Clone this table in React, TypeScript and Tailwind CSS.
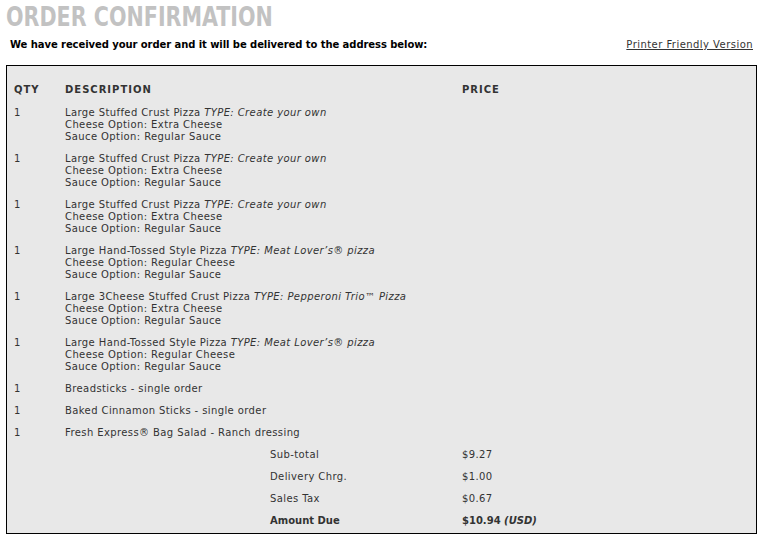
const items = [
  { qty: 1, name: 'Large Stuffed Crust Pizza', type: 'Create your own', cheese: 'Extra Cheese', sauce: 'Regular Sauce' },
  { qty: 1, name: 'Large Stuffed Crust Pizza', type: 'Create your own', cheese: 'Extra Cheese', sauce: 'Regular Sauce' },
  { qty: 1, name: 'Large Stuffed Crust Pizza', type: 'Create your own', cheese: 'Extra Cheese', sauce: 'Regular Sauce' },
  { qty: 1, name: 'Large Hand-Tossed Style Pizza', type: 'Meat Lover\u2019s\u00ae pizza', cheese: 'Regular Cheese', sauce: 'Regular Sauce' },
  { qty: 1, name: 'Large 3Cheese Stuffed Crust Pizza', type: 'Pepperoni Trio\u2122 Pizza', cheese: 'Extra Cheese', sauce: 'Regular Sauce' },
  { qty: 1, name: 'Large Hand-Tossed Style Pizza', type: 'Meat Lover\u2019s\u00ae pizza', cheese: 'Regular Cheese', sauce: 'Regular Sauce' },
];

const sides = [
  'Breadsticks - single order',
  'Baked Cinnamon Sticks - single order',
  'Fresh Express\u00ae Bag Salad - Ranch dressing',
];

const totals = [
  { label: 'Sub-total', value: '$9.27' },
  { label: 'Delivery Chrg.', value: '$1.00' },
  { label: 'Sales Tax', value: '$0.67' },
];

export default function App() {
  return (
    <div className="w-[778px] h-[542px] bg-white text-[#333] font-['DejaVu_Sans',Verdana,sans-serif] text-[10px] leading-[12px]">
      {/* title */}
      <h1 className="pl-[6px] pt-[3px] h-[30px]">
        <span className="inline-block origin-left scale-x-[0.85] font-['DejaVu_Sans_Condensed','DejaVu_Sans',sans-serif] font-bold text-[27px] leading-[28px] text-[#c2c2c2] whitespace-nowrap">
          ORDER CONFIRMATION
        </span>
      </h1>

      <div className="flex items-center justify-between pl-[10px] pr-[25px] mt-[9px] h-[12px]">
        <p className="font-bold text-[10px] text-black tracking-[-0.07px]">
          We have received your order and it will be delivered to the address below:
        </p>
        <a href="#" className="underline text-[#333] tracking-[0.45px]">Printer Friendly Version</a>
      </div>

      {/* order box */}
      <div className="ml-[6px] mt-[14px] w-[751px] border border-black bg-[#e8e8e8] pl-[7px] pt-[18px] tracking-[0.4px]">
        <div className="flex font-bold text-[#333] pb-[11px] tracking-[1px]">
          <div className="w-[51px]">QTY</div>
          <div className="w-[397px]">DESCRIPTION</div>
          <div>PRICE</div>
        </div>

        {items.map((it, i) => (
          <div key={i} className="flex pb-[10px]">
            <div className="w-[51px]">{it.qty}</div>
            <div className="w-[397px]">
              <div>
                {it.name} <i>TYPE: {it.type}</i>
              </div>
              <div>Cheese Option: {it.cheese}</div>
              <div>Sauce Option: {it.sauce}</div>
            </div>
            <div />
          </div>
        ))}

        {sides.map((s, i) => (
          <div key={i} className="flex pb-[10px]">
            <div className="w-[51px]">1</div>
            <div className="w-[397px]">{s}</div>
            <div />
          </div>
        ))}

        {totals.map((t) => (
          <div key={t.label} className="flex pb-[10px]">
            <div className="w-[256px]" />
            <div className="w-[192px]">{t.label}</div>
            <div>{t.value}</div>
          </div>
        ))}

        <div className="flex pb-[6px] font-bold tracking-normal">
          <div className="w-[256px]" />
          <div className="w-[192px]">Amount Due</div>
          <div>
            $10.94 <i>(USD)</i>
          </div>
        </div>
      </div>
    </div>
  );
}
